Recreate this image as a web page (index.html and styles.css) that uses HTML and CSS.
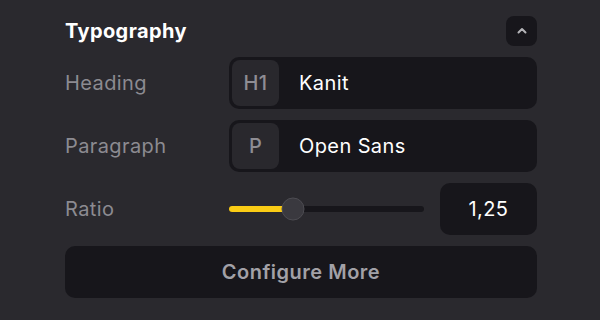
FILE: index.html
```html
<!DOCTYPE html>
<html lang="en">

<head>
    <meta charset="UTF-8">
    <meta name="viewport" content="width=device-width, initial-scale=1.0">
    <title>Typography</title>
    <link rel="stylesheet" href="styles.css">
</head>

<body>
    <main class="panel">
        <div class="panel-head">
            <h2>Typography</h2>
            <button class="toggle-btn" aria-label="Collapse">
                <svg width="10" height="7" viewBox="0 0 10 7">
                    <path d="M1.5 5.5 L5 2 L8.5 5.5" fill="none" stroke="#b4b4b8" stroke-width="2" stroke-linecap="round" stroke-linejoin="round" />
                </svg>
            </button>
        </div>

        <div class="rows">
            <div class="row">
                <span class="label">Heading</span>
                <div class="field">
                    <span class="badge">H1</span>
                    <span class="field-value">Kanit</span>
                </div>
            </div>

            <div class="row">
                <span class="label">Paragraph</span>
                <div class="field">
                    <span class="badge">P</span>
                    <span class="field-value">Open Sans</span>
                </div>
            </div>

            <div class="row">
                <span class="label">Ratio</span>
                <div class="ratio-controls">
                    <div class="slider">
                        <div class="slider-fill" style="width: 33%"></div>
                        <div class="slider-thumb" style="left: 33%"></div>
                    </div>
                    <div class="ratio-value">1,25</div>
                </div>
            </div>

            <button class="more-btn">Configure More</button>
        </div>
    </main>
</body>

</html>
```

FILE: styles.css
```css
body {
    margin: 0;
    background-color: #2a292e;
    font-family: Inter, "Noto Sans", sans-serif;
    letter-spacing: 0.4px;
}

.panel {
    width: 472px;
    padding: 15px 0 0 65px;
}

.panel-head {
    display: flex;
    justify-content: space-between;
    align-items: center;
    height: 31px;
}

.panel-head h2 {
    margin: 0;
    color: #ffffff;
    font-size: 20px;
    font-weight: 700;
}

.toggle-btn {
    width: 31px;
    height: 30px;
    padding: 0;
    border: none;
    border-radius: 8px;
    background-color: #17161b;
    display: flex;
    align-items: center;
    justify-content: center;
    cursor: pointer;
}

.rows {
    display: flex;
    flex-direction: column;
    gap: 11px;
    margin-top: 11px;
}

.row {
    display: grid;
    grid-template-columns: 164px 1fr;
    align-items: center;
}

.label {
    color: #8c8b91;
    font-size: 20px;
}

.field {
    height: 52px;
    box-sizing: border-box;
    padding: 3px;
    border-radius: 10px;
    background-color: #17161b;
    display: flex;
    align-items: center;
}

.badge {
    width: 47px;
    height: 46px;
    border-radius: 8px;
    background-color: #29282d;
    color: #8e8d93;
    font-size: 20px;
    font-weight: 500;
    display: flex;
    align-items: center;
    justify-content: center;
}

.field-value {
    margin-left: 20px;
    color: #ffffff;
    font-size: 20px;
}

.ratio-controls {
    display: flex;
    align-items: center;
    gap: 16px;
}

.slider {
    position: relative;
    flex: 1;
    height: 6px;
    border-radius: 3px;
    background-color: #17161b;
}

.slider-fill {
    height: 100%;
    border-radius: 3px;
    background-color: #facc15;
}

.slider-thumb {
    position: absolute;
    top: 50%;
    width: 23px;
    height: 23px;
    box-sizing: border-box;
    border: 1px solid #4d4c52;
    border-radius: 50%;
    background-color: #3a393f;
    transform: translate(-50%, -50%);
}

.ratio-value {
    width: 97px;
    height: 52px;
    border-radius: 10px;
    background-color: #17161b;
    color: #ffffff;
    font-size: 20px;
    display: flex;
    align-items: center;
    justify-content: center;
}

.more-btn {
    height: 52px;
    border: none;
    border-radius: 10px;
    background-color: #17161b;
    color: #a2a1a7;
    font-family: inherit;
    font-size: 20px;
    font-weight: 600;
    letter-spacing: 0.5px;
    cursor: pointer;
}
```
